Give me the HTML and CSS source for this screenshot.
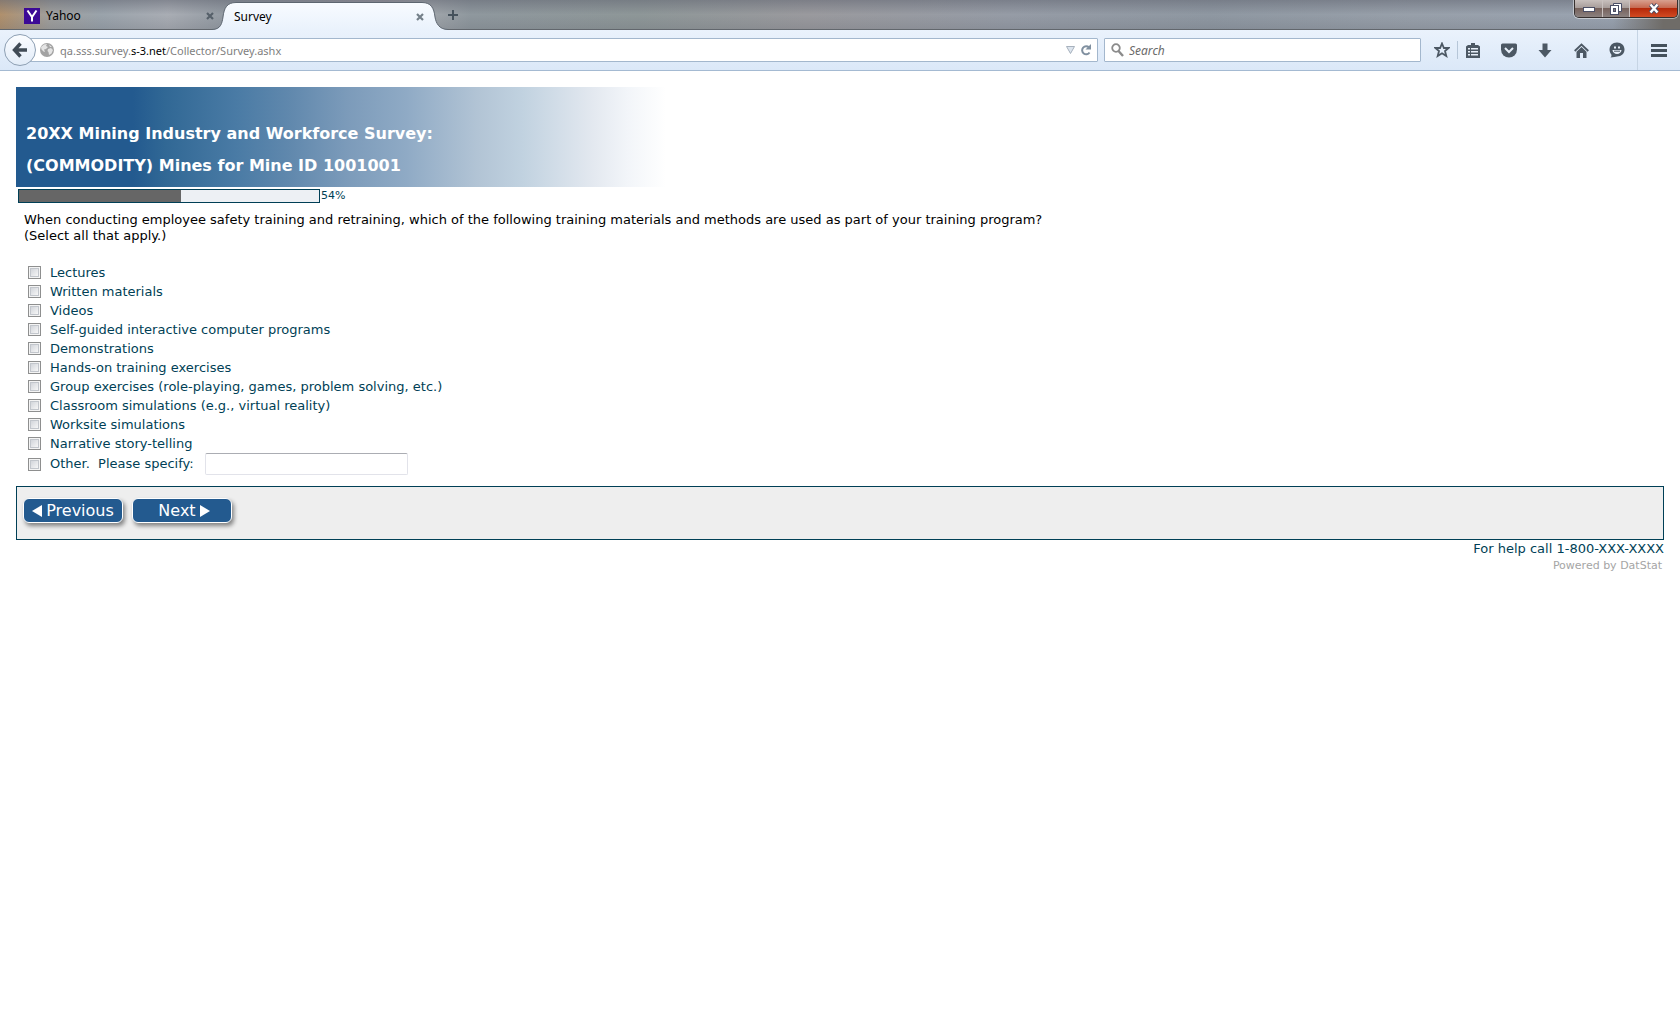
FILE: index.html
```html
<!DOCTYPE html>
<html lang="en">
<head>
<meta charset="utf-8">
<title>Survey</title>
<link rel="stylesheet" href="styles.css">
</head>
<body>
<header class="browser">
  <div class="tabstrip">
    <div class="tab">
      <svg class="favicon" viewBox="0 0 16 16" aria-hidden="true"><rect width="16" height="16" fill="#3c0a96"/><path d="M3.500 2.500L8 9L12.500 2.500M8 9V13.500" fill="none" stroke="#fff" stroke-width="2"/></svg>
      <span class="tab-title">Yahoo</span>
      <button class="icon-btn close" aria-label="Close Yahoo tab"><svg width="8" height="8" viewBox="0 0 8 8"><path d="M1 1L7 7M7 1L1 7" stroke="#56606a" stroke-width="2.200"/></svg></button>
    </div>
    <div class="tab active">
      <svg class="tab-shape" width="236" height="28" viewBox="0 0 236 28" aria-hidden="true">
        <defs><linearGradient id="tabfill" x1="0" y1="0" x2="0" y2="1"><stop offset="0" stop-color="#f8fbff"/><stop offset="1" stop-color="#eaf2fc"/></linearGradient></defs>
        <path d="M0 27.500C9 27.500 10 21 11 15C12 6 15 .5 24 .5H210C219 .5 222 6 223 15C224 21 227 27.500 236 27.500V28H0Z" fill="url(#tabfill)"/>
        <path d="M0 27.500C9 27.500 10 21 11 15C12 6 15 .5 24 .5H210C219 .5 222 6 223 15C224 21 227 27.500 236 27.500" fill="none" stroke="#5d6670"/>
      </svg>
      <span class="tab-title">Survey</span>
      <button class="icon-btn close" aria-label="Close Survey tab"><svg width="8" height="8" viewBox="0 0 8 8"><path d="M1 1L7 7M7 1L1 7" stroke="#75808a" stroke-width="2.200"/></svg></button>
    </div>
    <button class="icon-btn new-tab" aria-label="New tab"><svg width="10" height="10" viewBox="0 0 10 10"><path d="M5 0V10M0 5H10" stroke="#46525c" stroke-width="2"/></svg></button>
    <div class="window-controls">
      <button class="win" aria-label="Minimize"><svg width="12" height="6" viewBox="0 0 12 6"><rect x=".5" y=".5" width="11" height="4" fill="#fff" stroke="#4b4f66"/></svg></button>
      <button class="win restore" aria-label="Restore"><svg width="12" height="12" viewBox="0 0 12 12"><path d="M3.500 .5H11.500V8.500H3.500Z" fill="#fff" stroke="#4b4f66"/><rect x=".5" y="2.500" width="8" height="9" fill="#fff" stroke="#4b4f66"/><rect x="3.500" y="5.500" width="2" height="3" fill="#8a7a7a" stroke="#4b4f66"/></svg></button>
      <button class="win win-close" aria-label="Close"><svg width="12" height="11" viewBox="0 0 12 11"><path d="M2.500 1.500L9.500 9.500M9.500 1.500L2.500 9.500" stroke="#4b4f66" stroke-width="4.200"/><path d="M2.500 1.500L9.500 9.500M9.500 1.500L2.500 9.500" stroke="#fff" stroke-width="2.400"/></svg></button>
    </div>
  </div>
  <nav class="toolbar" aria-label="Navigation">
    <button class="back" aria-label="Back"><svg width="16" height="16" viewBox="0 0 16 16"><path d="M8.500 1.500L2.500 8L8.500 14.500M3 8H15" fill="none" stroke="#404b56" stroke-width="3.400"/></svg></button>
    <div class="urlbar">
      <svg width="14" height="14" viewBox="0 0 14 14" aria-hidden="true"><circle cx="7" cy="7" r="7" fill="#a3a3a3"/><path d="M1 4L4 1.500L7 1L6 3L8 4L6 6L4 6.500L5 9L3.500 8.500L1.500 6.500ZM8 6L11 5L13 7L11.500 10.500L9 12L8.500 9L7.500 8ZM9 1.500L12 4L10 4Z" fill="#e4e4e4"/></svg>
      <div class="url" role="textbox" aria-label="Address" contenteditable="true" spellcheck="false">qa.sss.survey.<span class="domain">s-3.net</span>/Collector/Survey.ashx</div>
      <button class="icon-btn" aria-label="Show history"><svg width="9" height="8" viewBox="0 0 9 8"><path d="M.5 .5H8.500L4.500 7.500Z" fill="#dde5ee" stroke="#a7b1bd"/></svg></button>
      <button class="icon-btn" aria-label="Reload"><svg width="11" height="12" viewBox="0 0 11 12"><path d="M8.500 8.500A4 4 0 1 1 8 3.500" fill="none" stroke="#8090a0" stroke-width="2"/><path d="M10 0V5.500H4.500Z" fill="#8090a0"/></svg></button>
    </div>
    <label class="searchbar">
      <svg width="13" height="14" viewBox="0 0 13 14" aria-hidden="true"><circle cx="5" cy="5" r="3.800" fill="none" stroke="#8b8b8b" stroke-width="1.800"/><path d="M7.500 8L12 13" stroke="#8b8b8b" stroke-width="2.400"/></svg>
      <input type="search" placeholder="Search" aria-label="Search">
    </label>
    <div class="tools">
      <button class="icon-btn tool" aria-label="Bookmark this page"><svg width="16" height="16" viewBox="0 0 16 16"><path d="M8 1.500L9.900 6H14.500L11 9L12.300 14L8 11.200L3.700 14L5 9L1.500 6H6.100Z" fill="none" stroke="#4c5864" stroke-width="1.800"/></svg></button>
      <span class="divider"></span>
      <button class="icon-btn tool" aria-label="Bookmarks list"><svg width="14" height="15" viewBox="0 0 14 15"><path d="M2 2H5V0H9V2H12L14 3.500V15H0V3.500Z" fill="#4c5864"/><path d="M2 5H4V6.500H2ZM5 5H12V6.500H5ZM2 8H4V9.500H2ZM5 8H12V9.500H5ZM2 11H4V12.500H2ZM5 11H12V12.500H5Z" fill="#e8f0fa"/></svg></button>
      <button class="icon-btn tool" aria-label="Pocket"><svg width="16" height="15" viewBox="0 0 16 15"><path d="M1.500 .5H14.500Q16 .5 16 2V6.500A8 8 0 0 1 0 6.500V2Q0 .5 1.500 .5Z" fill="#4c5864"/><path d="M4 5L8 9L12 5" fill="none" stroke="#e8f0fa" stroke-width="2"/></svg></button>
      <button class="icon-btn tool" aria-label="Downloads"><svg width="14" height="15" viewBox="0 0 14 15"><path d="M4.500 .5H9.500V7H13.500L7 14.500L.5 7H4.500Z" fill="#4c5864"/></svg></button>
      <button class="icon-btn tool" aria-label="Home"><svg width="15" height="15" viewBox="0 0 15 15"><path d="M.7 8L7.500 1.500L14.300 8" fill="none" stroke="#4c5864" stroke-width="1.800"/><path d="M7.500 4L12.500 8.800V15H9V10H6V15H2.500V8.800Z" fill="#4c5864"/></svg></button>
      <button class="icon-btn tool" aria-label="Chat"><svg width="16" height="16" viewBox="0 0 16 16"><path d="M8 .5C12.500 .5 15.500 3.500 15.500 7.500S12.500 14.500 8 14.500C7 14.500 4 15.500 1.500 15.500C3 14 2.500 12.500 2 12C-1.500 7 1.500 .5 8 .5Z" fill="#4c5864"/><path d="M5 4.500H7V6.500H5ZM9 4.500H11V6.500H9ZM3.500 8H12.500A4.500 4 0 0 1 3.500 8Z" fill="#e8f0fa"/><path d="M5 9.200H11" stroke="#4c5864"/></svg></button>
    </div>
    <button class="icon-btn menu" aria-label="Open menu"><svg width="16" height="13" viewBox="0 0 16 13"><path d="M0 0H16V3H0ZM0 5H16V8H0ZM0 10H16V13H0Z" fill="#45515c"/></svg></button>
  </nav>
</header>
<main class="page">
  <h1 class="banner">20XX Mining Industry and Workforce Survey:<br>(COMMODITY) Mines for Mine ID 1001001</h1>
  <div class="progress">
    <div class="track" role="progressbar" aria-label="Survey progress" aria-valuenow="54" aria-valuemin="0" aria-valuemax="100"><div class="fill" style="width:54%"></div></div>
    <span>54%</span>
  </div>
  <form class="survey">
    <fieldset class="question">
      <legend>When conducting employee safety training and retraining, which of the following training materials and methods are used as part of your training program?<br>(Select all that apply.)</legend>
      <label class="option"><input type="checkbox">Lectures</label>
      <label class="option"><input type="checkbox">Written materials</label>
      <label class="option"><input type="checkbox">Videos</label>
      <label class="option"><input type="checkbox">Self-guided interactive computer programs</label>
      <label class="option"><input type="checkbox">Demonstrations</label>
      <label class="option"><input type="checkbox">Hands-on training exercises</label>
      <label class="option"><input type="checkbox">Group exercises (role-playing, games, problem solving, etc.)</label>
      <label class="option"><input type="checkbox">Classroom simulations (e.g., virtual reality)</label>
      <label class="option"><input type="checkbox">Worksite simulations</label>
      <label class="option"><input type="checkbox">Narrative story-telling</label>
      <div class="other">
        <label class="option"><input type="checkbox">Other. &nbsp;Please specify:</label>
        <input class="specify" type="text" aria-label="Other, please specify">
      </div>
    </fieldset>
    <div class="actions">
      <button type="button" class="nav-btn"><svg width="10" height="12" viewBox="0 0 10 12" aria-hidden="true"><path d="M10 0V12L0 6Z" fill="#fff"/></svg>Previous</button>
      <button type="button" class="nav-btn next">Next<svg width="10" height="12" viewBox="0 0 10 12" aria-hidden="true"><path d="M0 0V12L10 6Z" fill="#fff"/></svg></button>
    </div>
  </form>
  <footer class="footer">
    <p class="help">For help call 1-800-XXX-XXXX</p>
    <p class="powered">Powered by DatStat</p>
  </footer>
</main>
</body>
</html>
```
FILE: styles.css
```css
* { box-sizing: border-box; }
body { margin: 0; background: #fff; color: #003f56; font: 13px/16px "DejaVu Sans", Verdana, sans-serif; }
button, input { font: inherit; color: inherit; }
svg { display: block; flex: none; }

/* browser window */
.browser { font: 12px/16px "Noto Sans", "Open Sans", sans-serif; color: #000; }
.tabstrip {
  display: flex; height: 30px; align-items: flex-end; border-bottom: 1px solid #62676d;
  background:
    linear-gradient(90deg, transparent 96%, #6f6c68 99%),
    linear-gradient(rgba(100,104,116,.55), rgba(140,146,154,0) 50%, rgba(90,94,104,.2)),
    linear-gradient(90deg, #b0906c, #a0a09e 3%, #9aa3ab 6%, #a9adb4 10%, #9098a0 14%, #a29ea4 23%, #a5a9ae 25%, #8f989e 28%, #8e9798 38%, #9a9a9e 48%, #969ca6 60%, #8f98a2 72%, #98a0aa 84%, #9aa4b2 100%);
}
.tab { position: relative; display: flex; align-items: center; width: 218px; height: 28px; padding: 2px 4px 1px 24px; gap: 6px; }
.tab.active { z-index: 1; width: 226px; padding: 2px 20px 1px 16px; margin-bottom: -1px; }
.tab-shape { position: absolute; left: -6px; top: 0; }
.tab-title { position: relative; flex: 1; }
.favicon { width: 16px; height: 16px; }
.icon-btn { display: flex; align-items: center; justify-content: center; padding: 0; border: 0; background: none; position: relative; }
.new-tab { width: 18px; height: 28px; }
.window-controls { display: flex; align-self: flex-start; height: 18px; margin: 0 2px 0 auto; border: 1px solid #36302f; border-top: 0; border-radius: 0 0 5px 5px; box-shadow: 0 0 0 1px rgba(255,255,255,.45); overflow: hidden; }
.win { display: flex; align-items: center; justify-content: center; width: 28px; padding: 0; border: 0; border-right: 1px solid #c9c1bf; background: linear-gradient(#c8c0bd, #a89d9a 45%, #75605a 46%, #8b817f); }
.win:first-child { padding-top: 3px; }
.restore { width: 27px; }
.win-close { width: 47px; border-right: 0; background: linear-gradient(#d8a08f, #c66a52 45%, #b32608 46%, #d24a22); }
.toolbar { display: flex; align-items: center; height: 41px; padding: 0 10px 0 4px; border-bottom: 1px solid #a4bad2; background: linear-gradient(#eaf2fc, #dbe8f8); }
.back { z-index: 1; display: flex; align-items: center; justify-content: center; flex: none; width: 32px; height: 32px; padding: 0; border: 1px solid #8d9fb3; border-radius: 50%; background: linear-gradient(#fafcff, #e2ecf8); }
.urlbar, .searchbar { display: flex; align-items: center; height: 24px; border: 1px solid #a3b7cd; border-radius: 1px; background: #fff; }
.urlbar { flex: 1; margin-left: -8px; padding: 0 5px 0 11px; gap: 6px; color: #808080; }
.url { flex: 1; padding-top: 2px; outline: 0; white-space: nowrap; font-size: 11px; }
.domain { color: #000; }
.searchbar { width: 317px; margin-left: 6px; padding-left: 6px; gap: 5px; }
.searchbar input { flex: 1; min-width: 0; padding: 2px 0 0; border: 0; outline: 0; background: none; }
.searchbar input::placeholder { color: #6a6a6a; font-style: italic; opacity: 1; }
.tools { display: flex; align-items: center; gap: 20px; margin: 0 12px 0 13px; }
.tool { width: 16px; height: 24px; }
.divider { width: 1px; height: 18px; margin: 0 -13px; background: #b6c6d8; }
.menu { width: 43px; height: 40px; margin-right: -10px; border-left: 1px solid #c6d4e4; }

/* survey page */
.page { padding: 16px; }
.banner { max-width: 650px; height: 100px; margin: 0; padding: 31px 10px 0; color: #fff; font-size: 16px; line-height: 32px; background: linear-gradient(90deg, #235a8f 18%, #316895 23%, #4a7ba5 34%, #6088ad 42%, #7c9bba 51%, #8faac5 60%, #b2c4d5 71%, #c1d2e0 78%, #e4e9f0 89%, #f2f5f9 94%, #fff 100%); }
.progress { display: flex; align-items: center; gap: 1px; padding: 2px 2px 3px; font-size: 11px; line-height: 14px; }
.track { width: 302px; height: 14px; border: 1px solid #003f56; background: #edf0f4; }
.fill { height: 100%; background: #666; }
.question { margin: 0; padding: 6px 8px 11px; border: 0; }
.question legend { display: block; float: left; width: 100%; margin-bottom: 19px; padding: 0; color: #000; }
.option { clear: both; display: flex; align-items: center; height: 19px; gap: 9px; }
.option input { appearance: none; width: 13px; height: 13px; margin: 0 0 0 4px; border: 1px solid #8e8f8f; box-shadow: inset 0 0 0 1px #f4f4f4, inset 0 0 0 2px #c2c6cc; background: linear-gradient(135deg, #c8ccd3, #f8f8f8 85%); }
.option input:checked { background: #235a8f; }
.other { display: flex; align-items: center; gap: 11px; }
.specify { width: 203px; height: 22px; padding: 1px 3px; border: 1px solid #e2e3ea; border-top-color: #abadb3; border-radius: 2px; background: #fff; }
.actions { display: flex; gap: 9px; height: 54px; padding: 11px 6px; border: 1px solid #003f56; background: #eee; }
.nav-btn { display: flex; align-items: center; justify-content: center; gap: 4px; width: 100px; height: 25px; padding: 0; border: 1px solid #fff; border-radius: 6px; background: #235a8f; color: #fff; font-size: 16px; line-height: 20px; box-shadow: 2px 3px 4px rgba(0,0,0,.45); }
.next { padding-left: 4px; }
.footer { text-align: right; }
.footer p { margin: 0; }
.footer .help { padding-top: 1px; }
.footer .powered { padding-right: 2px; color: #a5a5a5; font-size: 11px; line-height: 17px; }
```
